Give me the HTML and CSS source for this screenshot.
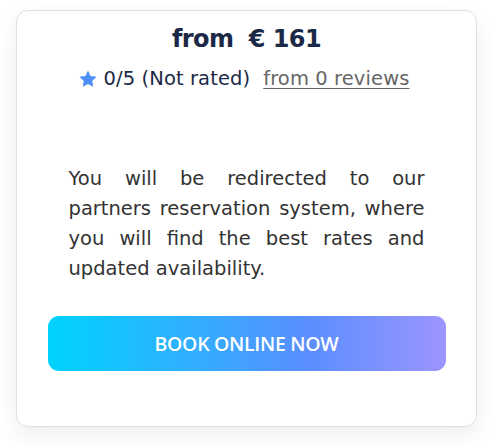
FILE: index.html
```html
<!DOCTYPE html>
<html lang="en">
<head>
<meta charset="utf-8">
<title>Book online</title>
<link rel="stylesheet" href="styles.css">
</head>
<body>
<div class="card">
  <div class="price">from &nbsp;€ 161</div>
  <div class="rating">
    <svg class="star" viewBox="0 0 24 24" width="20" height="20"><path d="M12 1.8l3.1 6.6 7.2.9-5.3 5 1.4 7.1L12 17.9l-6.4 3.5 1.4-7.1-5.3-5 7.2-.9z" fill="#4d8ff5"/></svg>
    <span class="score">0/5 (Not rated)</span>
    <a class="reviews" href="#">from 0 reviews</a>
  </div>
  <p class="note">You will be redirected to our partners reservation system, where you will find the best rates and updated availability.</p>
  <a class="book" href="#">BOOK ONLINE NOW</a>
</div>
</body>
</html>
```
FILE: styles.css
```css
html, body { margin: 0; background: #fff; }
body { padding: 10px 15px 20px 16px; font-family: "DejaVu Sans", "Open Sans", sans-serif; }
.card {
  width: 461px;
  height: 417px;
  box-sizing: border-box;
  border: 1px solid #e0e0e0;
  border-radius: 12px;
  background: #fff;
  box-shadow: 0 8px 22px rgba(0,0,0,0.07);
  display: flex;
  flex-direction: column;
  align-items: center;
  padding: 12px 31px 0 31px;
}
.price {
  font-size: 24px;
  font-weight: 700;
  color: #1b2946;
  line-height: 32px;
  letter-spacing: -0.6px;
}
.rating {
  margin-top: 10px;
  margin-right: 6px;
  display: flex;
  align-items: center;
  font-size: 19.5px;
  line-height: 28px;
  color: #1b2946;
  letter-spacing: 0.1px;
}
.star { margin-right: 6px; }
.reviews { margin-left: 13px; color: #666; text-decoration: underline; text-underline-offset: 3px; }
.note {
  margin: 71px 0 0 0;
  width: 356px;
  font-size: 19.5px;
  line-height: 30px;
  color: #333;
  text-align: justify;
}
.book {
  margin-top: 32px;
  width: 398px;
  height: 55px;
  border-radius: 11px;
  background: linear-gradient(90deg, #00d3ff 0%, #2fb0ff 35%, #5a8eff 65%, #9c95ff 100%);
  color: #fff;
  font-family: "Open Sans", sans-serif;
  font-size: 19.5px;
  font-weight: 600;
  display: flex;
  align-items: center;
  justify-content: center;
  text-decoration: none;
  letter-spacing: -0.3px;
}
```
